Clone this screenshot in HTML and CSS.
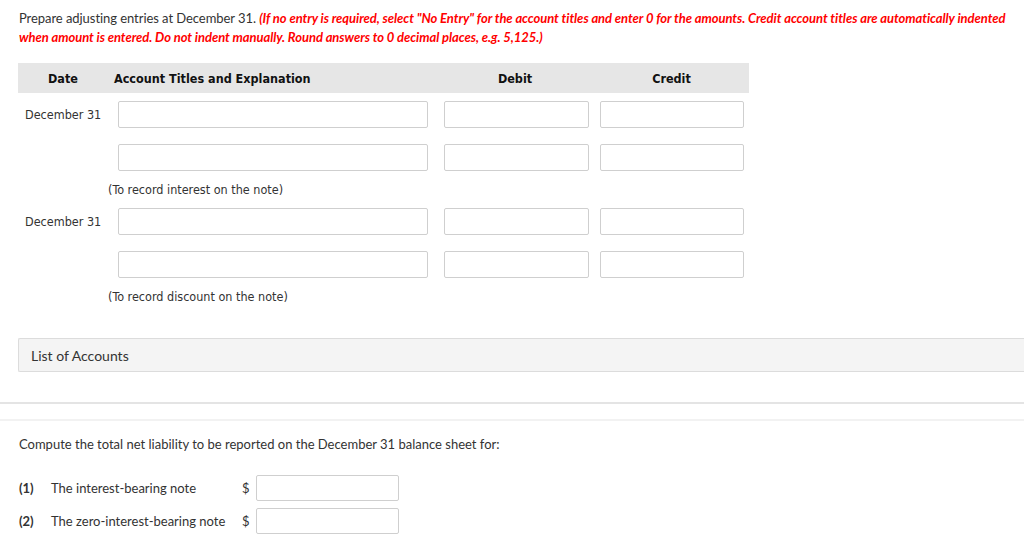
FILE: index.html
```html
<!DOCTYPE html>
<html>
<head>
<meta charset="utf-8">
<link rel="stylesheet" href="styles.css">
</head>
<body>
<p class="instructions">Prepare adjusting entries at December 31. <em class="warn">(If no entry is required, select "No Entry" for the account titles and enter 0 for the amounts. Credit account titles are automatically indented when amount is entered. Do not indent manually. Round answers to 0 decimal places, e.g. 5,125.)</em></p>

<div class="journal">
  <div class="jrow head">
    <div class="c-date">Date</div>
    <div class="c-acct">Account Titles and Explanation</div>
    <div class="c-num">Debit</div>
    <div class="c-num">Credit</div>
  </div>
  <div class="jrow">
    <div class="c-date">December 31</div>
    <div class="c-acct"><input class="in-acct" type="text"></div>
    <div class="c-num"><input class="in-num" type="text"></div>
    <div class="c-num"><input class="in-num" type="text"></div>
  </div>
  <div class="jrow">
    <div class="c-date"></div>
    <div class="c-acct"><input class="in-acct" type="text"></div>
    <div class="c-num"><input class="in-num" type="text"></div>
    <div class="c-num"><input class="in-num" type="text"></div>
  </div>
  <div class="explain">(To record interest on the note)</div>
  <div class="jrow">
    <div class="c-date">December 31</div>
    <div class="c-acct"><input class="in-acct" type="text"></div>
    <div class="c-num"><input class="in-num" type="text"></div>
    <div class="c-num"><input class="in-num" type="text"></div>
  </div>
  <div class="jrow">
    <div class="c-date"></div>
    <div class="c-acct"><input class="in-acct" type="text"></div>
    <div class="c-num"><input class="in-num" type="text"></div>
    <div class="c-num"><input class="in-num" type="text"></div>
  </div>
  <div class="explain">(To record discount on the note)</div>
</div>

<div class="accounts">List of Accounts</div>

<div class="rule1"></div>
<div class="rule2"></div>

<p class="compute">Compute the total net liability to be reported on the December 31 balance sheet for:</p>

<div class="answers">
  <div class="arow">
    <span class="num">(1)</span>
    <span class="label">The interest-bearing note</span>
    <span class="dollar">$</span>
    <input class="in-ans" type="text">
  </div>
  <div class="arow">
    <span class="num">(2)</span>
    <span class="label">The zero-interest-bearing note</span>
    <span class="dollar">$</span>
    <input class="in-ans" type="text">
  </div>
</div>
</body>
</html>
```

FILE: styles.css
```css
html, body {
  margin: 0;
  padding: 0;
  background: #fff;
}
body {
  font-family: Lato, "Open Sans", sans-serif;
  font-size: 13px;
  color: #333;
  overflow: hidden;
}
.instructions {
  margin: 0;
  padding: 9px 4px 0 19px;
  line-height: 19px;
  letter-spacing: -0.06px;
}
.warn {
  color: #f00;
  font-weight: bold;
  font-style: italic;
}
.journal {
  margin: 16px 0 0 18px;
  width: 731px;
  font-family: "DejaVu Sans Condensed", "DejaVu Sans", sans-serif;
  font-size: 12.5px;
  color: #333;
}
.jrow {
  display: grid;
  grid-template-columns: 90px 328px 158px 155px;
  align-items: center;
  height: 43px;
}
.jrow.head {
  height: 30px;
  background: #e6e6e6;
  font-weight: bold;
  color: #111;
}
.head .c-date, .head .c-num {
  text-align: center;
}
.head .c-acct {
  padding-left: 6px;
}
.c-date {
  padding-left: 7px;
}
.head .c-date {
  padding-left: 0;
}
.c-acct input { margin-left: 10px; }
.c-num input { margin-left: 8px; }
.jrow .c-num:last-child input { margin-left: 6px; }
input {
  display: block;
  box-sizing: border-box;
  height: 27px;
  border: 1px solid #cfcfcf;
  border-radius: 2px;
  background: #fff;
  margin: 0;
  padding: 0 4px;
}
.in-acct { width: 310px; }
.in-num { width: 145px; }
.jrow .c-num:last-child .in-num { width: 144px; }
.explain {
  height: 21px;
  line-height: 22px;
  padding-left: 90px;
}
.accounts {
  margin: 31px 0 0 18px;
  height: 32px;
  line-height: 33px;
  border: 1px solid #dcdcdc;
  border-right: none;
  border-radius: 2px 0 0 2px;
  background: #f4f4f4;
  padding-left: 12px;
  font-size: 14px;
  color: #333;
}
.rule1 {
  margin-top: 30px;
  height: 2px;
  background: #e4e4e4;
}
.rule2 {
  margin-top: 15px;
  height: 2px;
  background: #f2f2f2;
}
.compute {
  margin: 14px 0 0 19px;
  line-height: 19px;
}
.answers {
  margin: 21px 0 0 19px;
}
.arow {
  display: flex;
  align-items: center;
  height: 26px;
  margin-bottom: 7px;
}
.num {
  width: 32px;
  font-weight: bold;
}
.label {
  width: 191px;
}
.dollar {
  width: 14px;
}
.in-ans {
  width: 143px;
  height: 26px;
}
```
